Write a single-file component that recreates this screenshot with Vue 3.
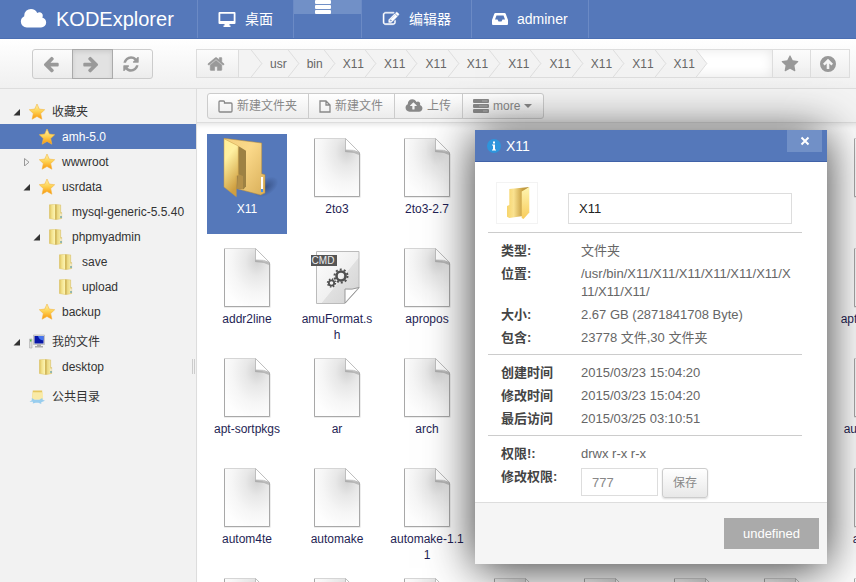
<script setup>
import { ref } from 'vue'

const crumbs = ['usr', 'bin', 'X11', 'X11', 'X11', 'X11', 'X11', 'X11', 'X11', 'X11', 'X11']

const tree = [
  { name: '收藏夹', level: 0, icon: 'star', arrow: 'open' },
  { name: 'amh-5.0', level: 1, icon: 'star', selected: true },
  { name: 'wwwroot', level: 1, icon: 'star', arrow: 'closed' },
  { name: 'usrdata', level: 1, icon: 'star', arrow: 'open' },
  { name: 'mysql-generic-5.5.40', level: 2, icon: 'folder' },
  { name: 'phpmyadmin', level: 2, icon: 'folder', arrow: 'open' },
  { name: 'save', level: 3, icon: 'folder' },
  { name: 'upload', level: 3, icon: 'folder' },
  { name: 'backup', level: 1, icon: 'star' },
  { name: '我的文件', level: 0, icon: 'computer', arrow: 'open' },
  { name: 'desktop', level: 1, icon: 'folder' },
  { name: '公共目录', level: 0, icon: 'public' }
]

const files = [
  'X11', '2to3', '2to3-2.7', '', '', '', '', '',
  'addr2line', 'amuFormat.sh', 'apropos', '', '', '', '', 'apt-ftparchive',
  'apt-sortpkgs', 'ar', 'arch', '', '', '', '', 'autoheaders',
  'autom4te', 'automake', 'automake-1.11', '', '', '', '', 'autoscan',
  '', '', '', '', '', '', '', ''
].map((name, i) => ({ name, type: i === 0 ? 'folder' : name.endsWith('.sh') ? 'cmd' : 'file' }))

const info = [
  [
    ['类型:', '文件夹'],
    ['位置:', '/usr/bin/X11/X11/X11/X11/X11/X11/X11/X11/X11/'],
    ['大小:', '2.67 GB (2871841708 Byte)'],
    ['包含:', '23778 文件,30 文件夹']
  ],
  [
    ['创建时间', '2015/03/23 15:04:20'],
    ['修改时间', '2015/03/23 15:04:20'],
    ['最后访问', '2015/03/25 03:10:51']
  ]
]

const fileName = ref('X11')
const mode = ref('777')
</script>

<template>
  <div class="app">
    <svg class="defs" aria-hidden="true">
      <defs>
        <linearGradient id="gStar" x1="0" y1="0" x2="0" y2="1">
          <stop offset="0" stop-color="#fff3ae" /><stop offset=".5" stop-color="#fdd04f" /><stop offset="1" stop-color="#f9940a" />
        </linearGradient>
        <linearGradient id="gFront" x1="0" y1="0" x2=".3" y2="1">
          <stop offset="0" stop-color="#ffef96" /><stop offset=".35" stop-color="#fff0a0" /><stop offset="1" stop-color="#cf9f40" />
        </linearGradient>
        <linearGradient id="gBack" x1="0" y1="0" x2="1" y2="1">
          <stop offset="0" stop-color="#f3cf7c" /><stop offset=".4" stop-color="#fbd98a" /><stop offset="1" stop-color="#d8ae58" />
        </linearGradient>
        <linearGradient id="gSmall" x1="0" y1="0" x2="1" y2="0">
          <stop offset="0" stop-color="#dcc05a" /><stop offset=".2" stop-color="#f3e28c" /><stop offset=".42" stop-color="#fbf2ae" /><stop offset=".52" stop-color="#c9aa48" /><stop offset=".64" stop-color="#e9d780" /><stop offset=".85" stop-color="#f4e79b" /><stop offset="1" stop-color="#d3b34d" />
        </linearGradient>
        <radialGradient id="gPage" cx=".72" cy=".22" r=".85">
          <stop offset="0" stop-color="#d2d2d2" /><stop offset=".3" stop-color="#e8e8e8" /><stop offset=".65" stop-color="#f6f6f6" /><stop offset="1" stop-color="#fefefe" />
        </radialGradient>
        <linearGradient id="gCmd" x1="0" y1="0" x2="1" y2="1">
          <stop offset="0" stop-color="#fdfdfd" /><stop offset=".55" stop-color="#f0f0f0" /><stop offset=".56" stop-color="#e0e0e0" /><stop offset="1" stop-color="#d2d2d2" />
        </linearGradient>
        <linearGradient id="gPropBack" x1="0" y1="0" x2="1" y2="0">
          <stop offset="0" stop-color="#f7d56c" /><stop offset=".3" stop-color="#fae290" /><stop offset=".7" stop-color="#c79f42" /><stop offset="1" stop-color="#b08a38" />
        </linearGradient>
        <linearGradient id="gPropFront" x1="0" y1="0" x2="0" y2="1">
          <stop offset="0" stop-color="#fff5b0" /><stop offset="1" stop-color="#f8cc5c" />
        </linearGradient>
        <radialGradient id="gShade">
          <stop offset="0" stop-color="#1d2f57" stop-opacity=".5" /><stop offset="1" stop-color="#1d2f57" stop-opacity="0" />
        </radialGradient>
      </defs>
      <symbol id="cloud" viewBox="0 0 2048 1792"><path d="M1984 1152q0 159-112.5 271.5t-271.5 112.5h-1088q-185 0-316.5-131.5t-131.5-316.5q0-132 71-241.5t187-163.5q-2-28-2-43 0-212 150-362t362-150q158 0 286.5 88t187.5 230q70-62 166-62 106 0 181 75t75 181q0 75-41 138 129 30 213 134.5t84 239.5z" /></symbol>
      <symbol id="cloud-up" viewBox="0 0 2048 1792"><path d="M1344 864q0-14-9-23l-352-352q-9-9-23-9t-23 9l-351 351q-10 12-10 24 0 14 9 23t23 9h224v352q0 13 9.5 22.5t22.5 9.5h192q13 0 22.5-9.5t9.5-22.5v-352h224q13 0 22.5-9.5t9.5-22.5zm640 288q0 159-112.5 271.5t-271.5 112.5h-1088q-185 0-316.5-131.5t-131.5-316.5q0-130 70-240t188-165q-2-30-2-43 0-212 150-362t362-150q156 0 285.5 87t188.5 231q71-62 166-62 106 0 181 75t75 181q0 76-41 138 130 31 213.5 135.5t83.5 238.5z" /></symbol>
      <symbol id="edit" viewBox="0 0 1792 1792"><path d="M888 1184l116-116-152-152-116 116v56h96v96h56zm440-720q-16-16-33 1l-350 350q-17 17-1 33t33-1l350-350q17-17 1-33zm80 594v190q0 119-84.5 203.5t-203.5 84.5h-832q-119 0-203.5-84.5t-84.5-203.5v-832q0-119 84.5-203.5t203.5-84.5h832q63 0 117 25 15 7 18 23 3 17-9 29l-49 49q-14 14-32 8-23-6-45-6h-832q-66 0-113 47t-47 113v832q0 66 47 113t113 47h832q66 0 113-47t47-113v-126q0-13 9-22l64-64q15-15 35-7t20 29zm-96-738l288 288-672 672h-288v-288zm444 132l-92 92-288-288 92-92q28-28 68-28t68 28l152 152q28 28 28 68t-28 68z" stroke="currentColor" stroke-width="50" /></symbol>
      <symbol id="home" viewBox="0 0 1792 1792"><path d="M1472 992v480q0 26-19 45t-45 19h-384v-384h-256v384h-384q-26 0-45-19t-19-45v-480q0-1 .5-3t.5-3l575-474 575 474q1 2 1 6zm223-69l-62 74q-8 9-21 11h-3q-13 0-21-7l-692-577-692 577q-12 8-24 7-13-2-21-11l-62-74q-8-10-7-23.500t11-21.500l719-599q32-26 76-26t76 26l244 204v-195q0-14 9-23t23-9h192q14 0 23 9t9 23v408l219 182q10 8 11 21.500t-7 23.500z" stroke="currentColor" stroke-width="50" /></symbol>
      <symbol id="left" viewBox="0 0 1792 1792"><path d="M1664 896v128q0 53-32.500 90.500t-84.500 37.500h-704l293 294q38 36 38 90t-38 90l-75 76q-37 37-90 37-52 0-91-37l-651-652q-37-37-37-90 0-52 37-91l651-650q38-38 91-38 52 0 90 38l75 74q38 38 38 91t-38 91l-293 293h704q52 0 84.500 37.500t32.500 90.500z" /></symbol>
      <symbol id="refresh" viewBox="0 0 1792 1792"><path d="M1639 1056q0 5-1 7-64 268-268 434.500t-478 166.500q-146 0-282.500-55t-243.500-157l-129 129q-19 19-45 19t-45-19-19-45v-448q0-26 19-45t45-19h448q26 0 45 19t19 45-19 45l-137 137q71 66 161 102t187 36q134 0 250-65t186-179q11-17 53-117 8-23 30-23h192q13 0 22.500 9.500t9.500 22.500zm25-800v448q0 26-19 45t-45 19h-448q-26 0-45-19t-19-45 19-45l138-138q-148-137-349-137-134 0-250 65t-186 179q-11 17-53 117-8 23-30 23h-199q-13 0-22.500-9.500t-9.500-22.500v-7q65-268 270-434.500t480-166.500q146 0 284 55.500t245 156.500l130-129q19-19 45-19t45 19 19 45z" /></symbol>
      <symbol id="fav" viewBox="0 0 1792 1792"><path d="M1728 647q0 22-26 48l-363 354 86 500q1 7 1 20 0 21-10.500 35.500t-30.500 14.500q-19 0-40-12l-449-236-449 236q-22 12-40 12-21 0-31.500-14.500t-10.500-35.500q0-6 2-20l86-500-364-354q-25-27-25-48 0-37 56-46l502-73 225-455q19-41 49-41t49 41l225 455 502 73q56 9 56 46z" /></symbol>
      <symbol id="up" viewBox="0 0 18 18"><path fill-rule="evenodd" d="M9 1a8 8 0 1 0 0 16A8 8 0 0 0 9 1zM9 3.700l5 5-1.700 1.700-2-2V14H7.700V8.400l-2 2L4 8.700z" /></symbol>
      <symbol id="screen" viewBox="0 0 18 16"><path fill-rule="evenodd" d="M1.500 1h15q1 0 1 1v10q0 1-1 1H11.500v1.500h1V16h-7v-1.500h1V13h-5q-1 0-1-1V2q0-1 1-1zM2.300 2.800v7.200h13.400V2.800z" /></symbol>
      <symbol id="server" viewBox="0 0 16 14"><path fill-rule="evenodd" d="M1 0h14q1 0 1 1v2q0 1-1 1H1Q0 4 0 3V1q0-1 1-1zM1 5h14q1 0 1 1v2q0 1-1 1H1Q0 9 0 8V6q0-1 1-1zM1 10h14q1 0 1 1v2q0 1-1 1H1q-1 0-1-1v-2q0-1 1-1z" /><path fill="#fff" opacity=".35" d="M9 1.500h5.500v1H9zM6 6.500h8.500v1H6zM10 11.500h4.500v1H10z" /></symbol>
      <symbol id="inbox" viewBox="0 0 16 14"><path fill-rule="evenodd" d="M3.500 1h9q1 0 1.300 1L16 8v4q0 1-1 1H1q-1 0-1-1V8l2.200-6q.3-1 1.300-1zM4.500 3.500L3 7.500h2.500l1 2h3l1-2H13l-1.500-4z" /></symbol>
      <symbol id="folder-o" viewBox="0 0 15 13"><path fill="none" stroke="currentColor" stroke-width="1.300" d="M1 3V2q0-1 1-1h3.500q1 0 1 1v1H13q1 0 1 1v7q0 1-1 1H2q-1 0-1-1z" /></symbol>
      <symbol id="file-o" viewBox="0 0 12 13"><path fill="none" stroke="currentColor" stroke-width="1.300" d="M1 1h6l4 4v7H1zM7 1v4h4" /></symbol>
      <symbol id="t-star" viewBox="0 0 16 16"><path fill="url(#gStar)" stroke="#f3b743" stroke-width=".6" d="M8 0l2.300 5.100 5.400.6-4 3.800 1.200 5.700L8 12.400l-4.900 2.800 1.200-5.700-4-3.800 5.400-.6z" /></symbol>
      <symbol id="t-folder" viewBox="0 0 16 16"><path fill="url(#gSmall)" stroke="#d8bf62" stroke-width=".4" d="M.3.800L6 .3l5.700.6v7.600h1v6L7 15.700.3 14.500z" /><path fill="#fff" d="M11.500 9.500h1V12h-1z" /><path fill="#48a3df" d="M11.500 12h1v2h-1z" /></symbol>
      <symbol id="t-computer" viewBox="0 0 16 16"><path fill="#ddd" stroke="#aaa" stroke-width=".6" d="M.5 5h2.500v9H.5zM4.500 1h11v9.500h-11z" /><path fill="#0817a8" d="M5.500 2h9v7.500h-9z" /><path fill="#4675ed" d="M9 2h5.500v4.500Q10 6 9 2z" /><path fill="#51bc45" d="M1 5.500h1.500v2H1z" /><path fill="#aaa" d="M8 10.500h4V12h2v1.500H6V12h2z" /></symbol>
      <symbol id="t-public" viewBox="0 0 17 16"><path fill="#e6c75e" d="M4 1h10v9H3.500z" /><path fill="#f9eaa6" d="M4 3h10.500l.5 8H3.300z" /><path fill="#8ec9ed" d="M3 9l3 2h5l3-2 .5 2 2.500 1-4 1.500v2L10 14H7l-3 1 .3-2H.5L3 11.500z" opacity=".9" /></symbol>
      <symbol id="f-file" viewBox="0 0 48 61">
        <path fill="#000" opacity=".14" d="M1 2h32l14.500 14v43.500H1z" />
        <path fill="url(#gPage)" d="M1.500.5H33L46.500 14v44.500h-45z" />
        <path fill="none" stroke="#a8a8a8" d="M1.500 0v58.500h45V14.500" />
        <path fill="none" stroke="#d5d5d5" d="M1 .5h31.500" />
        <path fill="#777" opacity=".4" d="M32 12l14 2v3l-5-2-9-1z" />
        <path fill="#fff" stroke="#b2b2b2" stroke-width=".8" d="M32.500 .5l14 14q-5-3-14-2.500z" />
      </symbol>
      <symbol id="f-cmd" viewBox="0 0 50 58"><path fill="url(#gCmd)" stroke="#bbb" d="M6.500 3.500H49V40L35 55.500H6.500z" /><path fill="#fff" stroke="#999" d="M35 55V41q7 1 14-1.500z" /><g fill="none" stroke="#505050"><circle cx="31" cy="28" r="4.500" stroke-width="2.600" /><circle cx="31" cy="28" r="6.500" stroke-width="2" stroke-dasharray="2 2.080" /><circle cx="21.500" cy="35" r="2.700" stroke-width="1.800" /><circle cx="21.500" cy="35" r="4" stroke-width="1.400" stroke-dasharray="1.500 1.640" /></g><path fill="#555" d="M1 7h26v11H1z" /></symbol>
      <symbol id="f-folder" viewBox="-1 0 56 62">
        <ellipse cx="42" cy="49" rx="14" ry="8" transform="rotate(-35 42 49)" fill="url(#gShade)" />
        <path fill="url(#gBack)" stroke="#b98b35" stroke-width=".5" d="M0 .3l37.700 4.700v30.700l3.300 1V55l-4.300 2L13 50.700z" />
        <path fill="#9d8143" d="M14.300 8l7.700 4.700v35.600l-2.300 3-7.700-.6z" />
        <path fill="#c9a052" d="M14 36l5 2v13l-6-.5z" opacity=".5" />
        <path fill="#fff" d="M37 39h2v15h-2z" /><path fill="#4b8fe8" d="M37 51h2v3h-2z" />
        <path fill="url(#gFront)" stroke="#c79b45" stroke-width=".5" d="M0 .7L14.300 8v29.300l-2 .7v20.700L0 49z" />
      </symbol>
      <symbol id="prop-folder" viewBox="0 0 26 34"><path fill="url(#gPropBack)" d="M5.300 3l20-2L19 6v24L5.300 32 3 30.700V20l2.300-1z" /><path fill="url(#gPropFront)" d="M17.700 5.500l7.600-4.500v25.500L19.500 33l-1.800-1z" /></symbol>
    </svg>

    <header class="topbar">
      <a class="brand" href="#"><svg class="i-brand"><use href="#cloud" /></svg>KODExplorer</a>
      <nav class="menu">
        <a href="#"><svg class="i-nav"><use href="#screen" /></svg>桌面</a>
        <a href="#" class="active" aria-label="server"><span><svg class="i-server"><use href="#server" /></svg></span></a>
        <a href="#"><svg class="i-nav"><use href="#edit" /></svg>编辑器</a>
        <a href="#"><svg class="i-nav inbox"><use href="#inbox" /></svg>adminer</a>
      </nav>
    </header>

    <div class="navbar">
      <div class="history">
        <button aria-label="back"><svg><use href="#left" /></svg></button>
        <button class="pressed" aria-label="forward"><svg class="flip"><use href="#left" /></svg></button>
        <button aria-label="refresh"><svg><use href="#refresh" /></svg></button>
      </div>
      <div class="address">
        <button aria-label="home"><svg><use href="#home" /></svg></button>
        <ol class="crumbs">
          <li class="first"><svg viewBox="0 0 12 28"><path d="M0 0l11 14L0 28" /></svg></li>
          <li v-for="(c, i) in crumbs" :key="i"><a href="#">{{ c }}</a><svg viewBox="0 0 12 28"><path d="M0 0l11 14L0 28" /></svg></li>
        </ol>
        <button aria-label="favourite"><svg><use href="#fav" /></svg></button>
        <button aria-label="up"><svg><use href="#up" /></svg></button>
      </div>
    </div>

    <div class="main">
      <aside class="sidebar">
        <ul>
          <li v-for="n in tree" :key="n.name" :class="['l' + n.level, { selected: n.selected }]">
            <svg class="arrow" viewBox="0 0 8 8">
              <path v-if="n.arrow === 'open'" fill="#333" d="M8 1v6.500H1.500z" />
              <path v-else-if="n.arrow === 'closed'" fill="none" stroke="#999" d="M2.500 .5v7.500L7 4.200z" />
            </svg>
            <svg class="node"><use :href="'#t-' + n.icon" /></svg>
            <a href="#">{{ n.name }}</a>
          </li>
        </ul>
        <i class="grip"></i>
      </aside>

      <section class="content">
        <div class="tools">
          <div class="group">
            <button><svg class="i-folder"><use href="#folder-o" /></svg>新建文件夹</button>
            <button><svg class="i-file"><use href="#file-o" /></svg>新建文件</button>
            <button><svg class="i-cloud"><use href="#cloud-up" /></svg>上传</button>
            <button><svg class="i-more"><use href="#server" /></svg>more<i class="caret"></i></button>
          </div>
        </div>
        <div class="files">
          <div v-for="(f, i) in files" :key="i" class="file" :class="{ selected: i === 0 }">
            <div class="pic"><svg :class="'p-' + f.type"><use :href="'#f-' + f.type" /></svg><b v-if="f.type === 'cmd'">CMD</b></div>
            <span v-if="f.name">{{ f.name }}</span>
          </div>
        </div>
      </section>
    </div>

    <div class="dialog" role="dialog" aria-labelledby="dlg-title">
      <div class="title">
        <svg viewBox="0 0 16 16"><circle cx="8" cy="8" r="7" fill="#2e95dc" /><path fill="#fff" d="M7 3.500h2v2H7zM6 6.500h3v5h1v1H6v-1h1v-4H6z" /></svg>
        <h2 id="dlg-title">X11</h2>
        <button class="close" aria-label="close"><svg viewBox="0 0 10 10"><path d="M1.500 1.500l7 7m0-7l-7 7" /></svg></button>
      </div>
      <div class="body">
        <div class="head">
          <div class="thumb"><svg><use href="#prop-folder" /></svg></div>
          <input v-model="fileName" class="name" aria-label="name">
        </div>
        <dl v-for="(g, i) in info" :key="i">
          <div v-for="r in g" :key="r[0]"><dt>{{ r[0] }}</dt><dd>{{ r[1] }}</dd></div>
        </dl>
        <dl>
          <div><dt>权限!:</dt><dd>drwx r-x r-x</dd></div>
          <div>
            <dt><label for="mode">修改权限:</label></dt>
            <dd class="edit"><input id="mode" v-model="mode"><button>保存</button></dd>
          </div>
        </dl>
      </div>
      <div class="foot"><button>undefined</button></div>
    </div>
  </div>
</template>

<style>
html, body, #app { height: 100%; }
body { overflow: hidden; }
</style>

<style scoped>
* { box-sizing: border-box; }
.app {
  position: relative;
  display: flex;
  flex-direction: column;
  height: 100%;
  overflow: hidden;
  background: #fff;
  color: #333;
  font: 12px/18px "Liberation Sans", "Noto Sans CJK SC", sans-serif;
}
.defs { position: absolute; width: 0; height: 0; }
svg { display: block; fill: currentColor; flex: none; }
a { color: inherit; text-decoration: none; }
ul, ol, dl, dd { margin: 0; padding: 0; list-style: none; }
button { font: inherit; margin: 0; cursor: pointer; }
input { font: inherit; }

.topbar { display: flex; flex: none; height: 39px; background: #5578ba; border-bottom: 1px solid #4b6fb3; color: #fff; }
.brand { display: flex; align-items: center; width: 197px; padding-left: 20px; gap: 9px; font-size: 20px; }
.i-brand { width: 27px; height: 24px; }
.menu { display: flex; font-size: 14px; border-left: 1px solid #6b8ac5; }
.menu a { display: flex; align-items: center; gap: 9px; padding: 0 20px; border-right: 1px solid #6b8ac5; }
.menu a.active { width: 68px; padding: 0; align-items: flex-start; }
.menu a.active span { display: flex; flex: 1; height: 14px; padding-right: 10px; justify-content: center; background: #7190c7; }
.i-nav { width: 18px; height: 16px; }
.inbox { width: 16px; }
.i-server { width: 16px; height: 14px; }

.navbar { display: flex; flex: none; align-items: flex-start; height: 50px; padding: 10px 6px 0 32px; background: linear-gradient(#fff, #f0f0f0); border-bottom: 1px solid #ddd; color: #999; }
.history { display: flex; width: 121px; margin-right: 43px; }
.history button { display: flex; flex: 1; height: 30px; align-items: center; justify-content: center; padding: 0 4px 0 0; background: linear-gradient(#fcfcfc, #ececec); border: 1px solid #ccc; color: #999; }
.history button + button { margin-left: -1px; }
.history button:first-child { border-radius: 3px 0 0 3px; }
.history button:last-child { border-radius: 0 3px 3px 0; }
.history .pressed { position: relative; background: #e2e2e2; border-color: #aaa; box-shadow: inset 0 2px 4px #ccc; }
.history svg, .address button svg { width: 18px; height: 18px; }
.flip { transform: scaleX(-1); }
.address { display: flex; flex: 1; min-width: 0; height: 29px; border: 1px solid #ddd; background: #fff; }
.address button { display: flex; align-items: center; justify-content: center; width: 38px; padding: 0 4px 0 0; border: 0; border-left: 1px solid #ddd; background: linear-gradient(#fcfcfc, #eee); color: #999; }
.address button:first-child { width: 42px; border-left: 0; border-right: 1px solid #ddd; }
.address button:last-child { width: 39px; }
.crumbs { display: flex; flex: 1; min-width: 0; overflow: hidden; background: #fff; box-shadow: inset 0 0 12px #e8e8e8; color: #666; font-kerning: none; }
.crumbs li { display: flex; align-items: center; padding-left: 7px; gap: 1px; background: linear-gradient(90deg, #f3f3f3 0 calc(100% - 11px), transparent 0); }
.crumbs li.first { padding-left: 12px; }
.crumbs svg { width: 12px; height: 27px; fill: #f3f3f3; stroke: #ddd; }
.crumbs li:not(:last-child) { background: #f3f3f3; }

.main { display: flex; flex: 1; min-height: 0; }
.sidebar { position: relative; flex: none; width: 197px; padding-top: 5px; background: #f2f2f2; border-right: 1px solid #ddd; }
.sidebar li { display: flex; align-items: center; height: 25px; }
.sidebar .l0 { margin-top: 5px; padding-left: 12px; }
.sidebar .l1 { padding-left: 22px; }
.sidebar .l2 { padding-left: 32px; }
.sidebar .l3 { padding-left: 42px; }
.sidebar .selected { background: #5578ba; color: #fff; }
.arrow { width: 8px; height: 8px; margin-right: 9px; }
.node { width: 16px; height: 16px; margin-right: 7px; }
.grip { position: absolute; right: 1px; top: 270px; width: 3px; height: 15px; border: solid #ccc; border-width: 0 1px; }

.content { display: flex; flex: 1; flex-direction: column; min-width: 0; }
.tools { flex: none; height: 34px; padding: 4px 10px 0; background: #f4f4f4; border-bottom: 1px solid #ddd; }
.group { display: inline-flex; height: 26px; border: 1px solid #ccc; border-radius: 3px; background: linear-gradient(#fff, #ececec); overflow: hidden; }
.group button { display: flex; align-items: center; gap: 4px; padding: 0 11px 0 10px; border: 0; border-right: 1px solid #ccc; background: none; color: #888; }
.group button:last-child { border-right: 0; }
.i-folder { width: 15px; height: 13px; }
.i-file { width: 12px; height: 13px; }
.i-cloud { width: 18px; height: 16px; }
.i-more { width: 16px; height: 14px; }
.caret { border: solid transparent; border-width: 4px 4px 0; border-top-color: #888; }
.files { display: grid; flex: 1; grid-template-columns: repeat(8, 80px); grid-auto-rows: 100px; gap: 10px; min-height: 0; padding: 11px 10px 0; overflow: hidden; box-shadow: inset 0 6px 6px -5px #ddd; }
.file { color: #1f1f55; text-align: center; line-height: 16px; }
.file.selected { background: #5578ba; color: #fff; }
.file span { display: block; padding: 0 3px; word-break: break-all; }
.pic { position: relative; display: flex; height: 67px; justify-content: center; align-items: flex-start; padding-top: 4px; }
.p-file { width: 48px; height: 61px; }
.p-cmd { width: 50px; height: 58px; margin-right: 5px; }
.p-folder { width: 56px; height: 62px; margin-left: 8px; }
.pic b { position: absolute; left: 13px; top: 11px; width: 26px; color: #eee; font-size: 10px; font-weight: 400; line-height: 11px; }

.dialog { position: absolute; left: 475px; top: 130px; width: 352px; background: #fff; box-shadow: 0 4px 44px rgba(0, 0, 0, .8); color: #666; }
.title { display: flex; align-items: center; height: 32px; padding: 0 5px 0 11px; background: #5578ba; border-bottom: 1px solid #4062a8; color: #fff; }
.title > svg { width: 16px; height: 16px; }
.title h2 { flex: 1; margin: 0 0 0 4px; font-size: 14px; font-weight: 400; }
.close { display: flex; align-self: flex-start; justify-content: center; align-items: center; width: 35px; height: 22px; padding: 0; border: 0; background: #7190c7; color: #fff; }
.close svg { width: 10px; height: 10px; fill: none; stroke: currentColor; stroke-width: 2; }
.body { padding: 20px 25px 4px 13px; font-size: 13px; }
.head { display: flex; align-items: flex-end; padding: 0 10px 8px 8px; }
.thumb { display: flex; align-items: center; justify-content: center; width: 42px; height: 42px; margin-right: 30px; border: 1px solid #f3f3f3; }
.thumb svg { width: 26px; height: 34px; }
.name { flex: 1; min-width: 0; height: 31px; padding: 0 10px; border: 1px solid #ddd; color: #222; }
.body dl { display: flex; flex-direction: column; gap: 5px; padding: 9px 0 7px 13px; border-top: 1px solid #ccc; }
.body dl:last-child { padding-bottom: 0; }
.body dl div { display: flex; }
.body dt { flex: none; width: 80px; color: #444; font-weight: 700; }
.body dd { flex: 1; min-width: 0; padding-right: 6px; word-break: break-all; }
.body .edit { display: flex; gap: 4px; }
.edit input { width: 77px; height: 28px; padding: 0 10px; border: 1px solid #ddd; color: #888; }
.edit button { width: 46px; height: 30px; padding: 0; border: 1px solid #ccc; border-radius: 3px; background: linear-gradient(#fff, #e8e8e8); box-shadow: 0 1px 2px #ddd; color: #888; font-size: 12px; }
.foot { display: flex; justify-content: flex-end; padding: 15px 8px; background: #f5f5f5; border-top: 1px solid #ddd; }
.foot button { width: 95px; height: 31px; padding: 0; border: 0; background: #aaa; color: #fff; font-size: 13px; }
</style>
